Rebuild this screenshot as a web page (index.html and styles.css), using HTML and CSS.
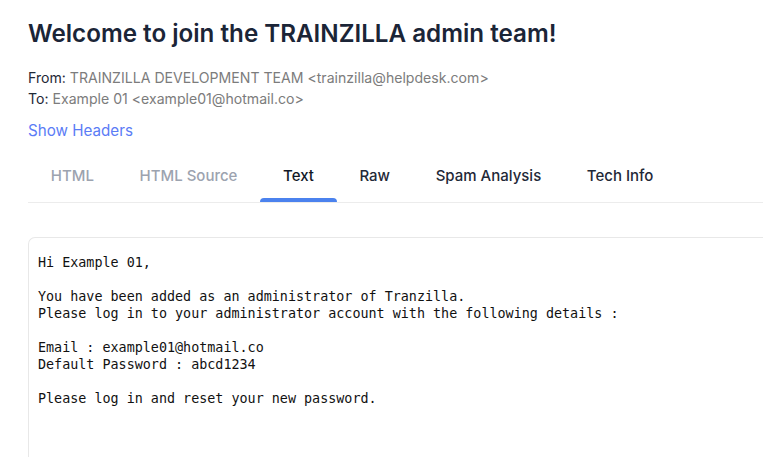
FILE: index.html
```html
<!DOCTYPE html>
<html>
<head>
<meta charset="utf-8">
<link rel="stylesheet" href="styles.css">
</head>
<body>
<div class="page">
  <h1 class="title">Welcome to join the TRAINZILLA admin team!</h1>
  <div class="meta">
    <div class="meta-row"><span class="label">From:</span> <span class="value">TRAINZILLA DEVELOPMENT TEAM &lt;trainzilla@helpdesk.com&gt;</span></div>
    <div class="meta-row"><span class="label">To:</span> <span class="value">Example 01 &lt;example01@hotmail.co&gt;</span></div>
  </div>
  <a class="show-headers" href="#">Show Headers</a>
  <nav class="tabs">
    <div class="tab muted">HTML</div>
    <div class="tab muted">HTML Source</div>
    <div class="tab active">Text</div>
    <div class="tab">Raw</div>
    <div class="tab">Spam Analysis</div>
    <div class="tab">Tech Info</div>
  </nav>
  <div class="body-box">
<pre class="text">Hi Example 01,

You have been added as an administrator of Tranzilla.
Please log in to your administrator account with the following details :

Email : example01@hotmail.co
Default Password : abcd1234

Please log in and reset your new password.</pre>
  </div>
</div>
</body>
</html>
```
FILE: styles.css
```css
* { box-sizing: border-box; }
html, body { margin: 0; padding: 0; background: #fff; overflow: hidden; }
body { font-family: Inter, "Noto Sans", sans-serif; color: #1f2937; }
.page { padding: 18px 0 0 28px; width: 763px; height: 457px; overflow: hidden; }
.title {
  margin: 0;
  font-size: 24.2px;
  font-weight: 600;
  line-height: 32px;
  color: #1b2537;
}
.meta { margin-top: 17px; font-size: 14.1px; line-height: 21px; }
.label { color: #1f2937; }
.value { color: #7c7c7c; }
.show-headers {
  display: inline-block;
  margin-top: 12px;
  font-size: 15.2px;
  line-height: 20px;
  color: #5b7cf6;
  text-decoration: none;
}
.tabs {
  display: flex;
  margin-top: 14px;
  border-bottom: 1px solid #ececec;
}
.tab {
  padding: 11px 22.8px 16px;
  font-size: 15px;
  line-height: 20px;
  font-weight: 500;
  color: #1f2937;
  position: relative;
}
.tab.muted { color: #9ca3af; }
.tab.active { color: #111827; }
.tab.active::after {
  content: "";
  position: absolute;
  left: 0; right: 0; bottom: 0;
  height: 4px;
  background: #4b82ee;
  border-radius: 4px 4px 0 0;
}
.body-box {
  margin-top: 34px;
  border: 1px solid #e8e8e8;
  border-right: none;
  border-radius: 7px 0 0 0;
  height: 260px;
  padding: 16px 9px;
}
.text {
  margin: 0;
  font-family: "DejaVu Sans Mono", monospace;
  font-size: 13.4px;
  line-height: 17px;
  color: #111;
}
```
